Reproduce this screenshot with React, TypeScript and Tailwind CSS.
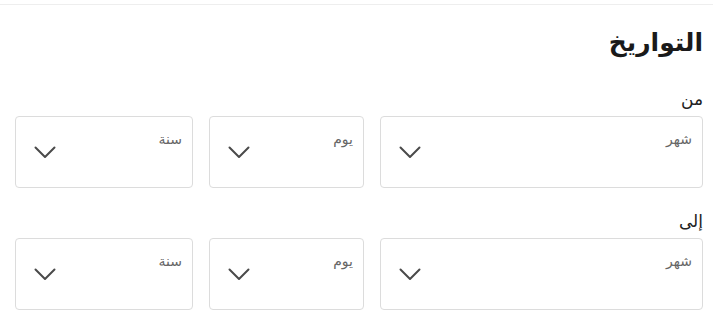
const font = { fontFamily: '"Noto Sans", "DejaVu Sans", sans-serif' }

function Chevron() {
  return (
    <svg width="22" height="13" viewBox="0 0 22 13" fill="none" className="text-[#4a4a4a]">
      <polyline points="1.5,1.5 11,11 20.5,1.5" stroke="currentColor" strokeWidth="2" strokeLinecap="round" strokeLinejoin="round" />
    </svg>
  )
}

function SelectBox({ label }: { label: string }) {
  return (
    <div className="relative h-[72px] rounded border border-[#dcdcdc] bg-white">
      <span className="absolute right-[10px] top-[11px] text-[14px] text-[#666]">{label}</span>
      <div className="flex h-full items-center justify-end pl-[18px] pt-[1px]">
        <Chevron />
      </div>
    </div>
  )
}

function DateRow({ title }: { title: string }) {
  return (
    <div>
      <div className="text-[17px] leading-6 text-[#222]">{title}</div>
      <div className="mt-[5px] grid grid-cols-[323px_155px_178px] gap-[16px]">
        <SelectBox label="شهر" />
        <SelectBox label="يوم" />
        <SelectBox label="سنة" />
      </div>
    </div>
  )
}

export default function App() {
  return (
    <div dir="rtl" style={font} className="h-[330px] w-[713px] overflow-hidden bg-white">
      <div className="mt-1 border-t border-[#eeeeee] pr-[10px] pl-[15px]">
        <h2 className="mt-[20px] text-[25px] font-bold leading-8 text-[#1a1a1a]">التواريخ</h2>
        <div className="mt-[30px] flex flex-col gap-[21px]">
          <DateRow title="من" />
          <DateRow title="إلى" />
        </div>
      </div>
    </div>
  )
}
